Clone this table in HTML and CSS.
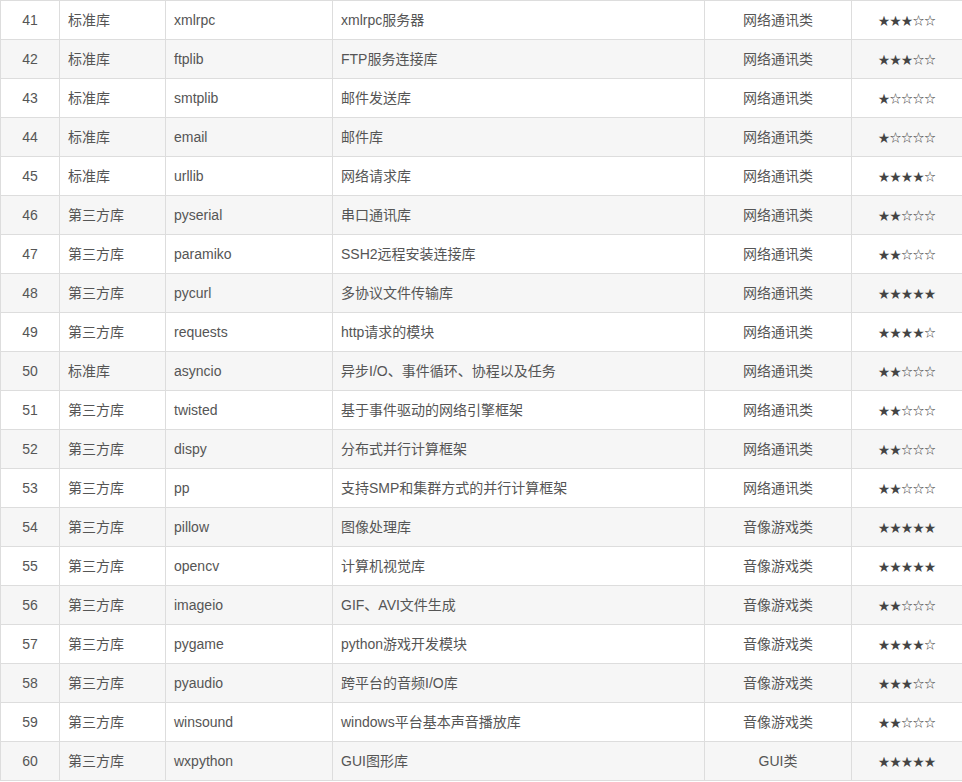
FILE: index.html
```html
<!DOCTYPE html>
<html lang="zh-CN">
<head>
<meta charset="utf-8">
<link rel="stylesheet" href="styles.css">
</head>
<body>
<table class="lib-table">
<colgroup>
<col class="c-no"><col class="c-type"><col class="c-name"><col class="c-desc"><col class="c-cat"><col class="c-star">
</colgroup>
<tbody>
<tr><td class="num">41</td><td>标准库</td><td>xmlrpc</td><td>xmlrpc服务器</td><td class="mid">网络通讯类</td><td class="stars">★★★☆☆</td></tr>
<tr><td class="num">42</td><td>标准库</td><td>ftplib</td><td>FTP服务连接库</td><td class="mid">网络通讯类</td><td class="stars">★★★☆☆</td></tr>
<tr><td class="num">43</td><td>标准库</td><td>smtplib</td><td>邮件发送库</td><td class="mid">网络通讯类</td><td class="stars">★☆☆☆☆</td></tr>
<tr><td class="num">44</td><td>标准库</td><td>email</td><td>邮件库</td><td class="mid">网络通讯类</td><td class="stars">★☆☆☆☆</td></tr>
<tr><td class="num">45</td><td>标准库</td><td>urllib</td><td>网络请求库</td><td class="mid">网络通讯类</td><td class="stars">★★★★☆</td></tr>
<tr><td class="num">46</td><td>第三方库</td><td>pyserial</td><td>串口通讯库</td><td class="mid">网络通讯类</td><td class="stars">★★☆☆☆</td></tr>
<tr><td class="num">47</td><td>第三方库</td><td>paramiko</td><td>SSH2远程安装连接库</td><td class="mid">网络通讯类</td><td class="stars">★★☆☆☆</td></tr>
<tr><td class="num">48</td><td>第三方库</td><td>pycurl</td><td>多协议文件传输库</td><td class="mid">网络通讯类</td><td class="stars">★★★★★</td></tr>
<tr><td class="num">49</td><td>第三方库</td><td>requests</td><td>http请求的模块</td><td class="mid">网络通讯类</td><td class="stars">★★★★☆</td></tr>
<tr><td class="num">50</td><td>标准库</td><td>asyncio</td><td>异步I/O、事件循环、协程以及任务</td><td class="mid">网络通讯类</td><td class="stars">★★☆☆☆</td></tr>
<tr><td class="num">51</td><td>第三方库</td><td>twisted</td><td>基于事件驱动的网络引擎框架</td><td class="mid">网络通讯类</td><td class="stars">★★☆☆☆</td></tr>
<tr><td class="num">52</td><td>第三方库</td><td>dispy</td><td>分布式并行计算框架</td><td class="mid">网络通讯类</td><td class="stars">★★☆☆☆</td></tr>
<tr><td class="num">53</td><td>第三方库</td><td>pp</td><td>支持SMP和集群方式的并行计算框架</td><td class="mid">网络通讯类</td><td class="stars">★★☆☆☆</td></tr>
<tr><td class="num">54</td><td>第三方库</td><td>pillow</td><td>图像处理库</td><td class="mid">音像游戏类</td><td class="stars">★★★★★</td></tr>
<tr><td class="num">55</td><td>第三方库</td><td>opencv</td><td>计算机视觉库</td><td class="mid">音像游戏类</td><td class="stars">★★★★★</td></tr>
<tr><td class="num">56</td><td>第三方库</td><td>imageio</td><td>GIF、AVI文件生成</td><td class="mid">音像游戏类</td><td class="stars">★★☆☆☆</td></tr>
<tr><td class="num">57</td><td>第三方库</td><td>pygame</td><td>python游戏开发模块</td><td class="mid">音像游戏类</td><td class="stars">★★★★☆</td></tr>
<tr><td class="num">58</td><td>第三方库</td><td>pyaudio</td><td>跨平台的音频I/O库</td><td class="mid">音像游戏类</td><td class="stars">★★★☆☆</td></tr>
<tr><td class="num">59</td><td>第三方库</td><td>winsound</td><td>windows平台基本声音播放库</td><td class="mid">音像游戏类</td><td class="stars">★★☆☆☆</td></tr>
<tr><td class="num">60</td><td>第三方库</td><td>wxpython</td><td>GUI图形库</td><td class="mid">GUI类</td><td class="stars">★★★★★</td></tr>
</tbody>
</table>
</body>
</html>
```
FILE: styles.css
```css
html, body {
  margin: 0;
  padding: 0;
  background: #fff;
}
.lib-table {
  border-collapse: collapse;
  table-layout: fixed;
  width: 962px;
  font-family: "Liberation Sans", "Noto Sans CJK SC", sans-serif;
  font-size: 14px;
  color: #555;
}
.c-no { width: 59px; }
.c-type { width: 106px; }
.c-name { width: 167px; }
.c-desc { width: 372px; }
.c-cat { width: 147px; }
.c-star { width: 111px; }
.lib-table td {
  border: 1px solid #ddd;
  height: 39px;
  padding: 0 8px;
  box-sizing: border-box;
  line-height: 20px;
  vertical-align: middle;
  white-space: nowrap;
}
.lib-table tr:nth-child(even) td {
  background: #f6f6f6;
}
.lib-table td.num,
.lib-table td.mid,
.lib-table td.stars {
  text-align: center;
}
.lib-table td.stars {
  color: #444;
  font-family: "Noto Sans CJK SC", sans-serif;
  font-size: 11.5px;
  letter-spacing: 0;
}
```
